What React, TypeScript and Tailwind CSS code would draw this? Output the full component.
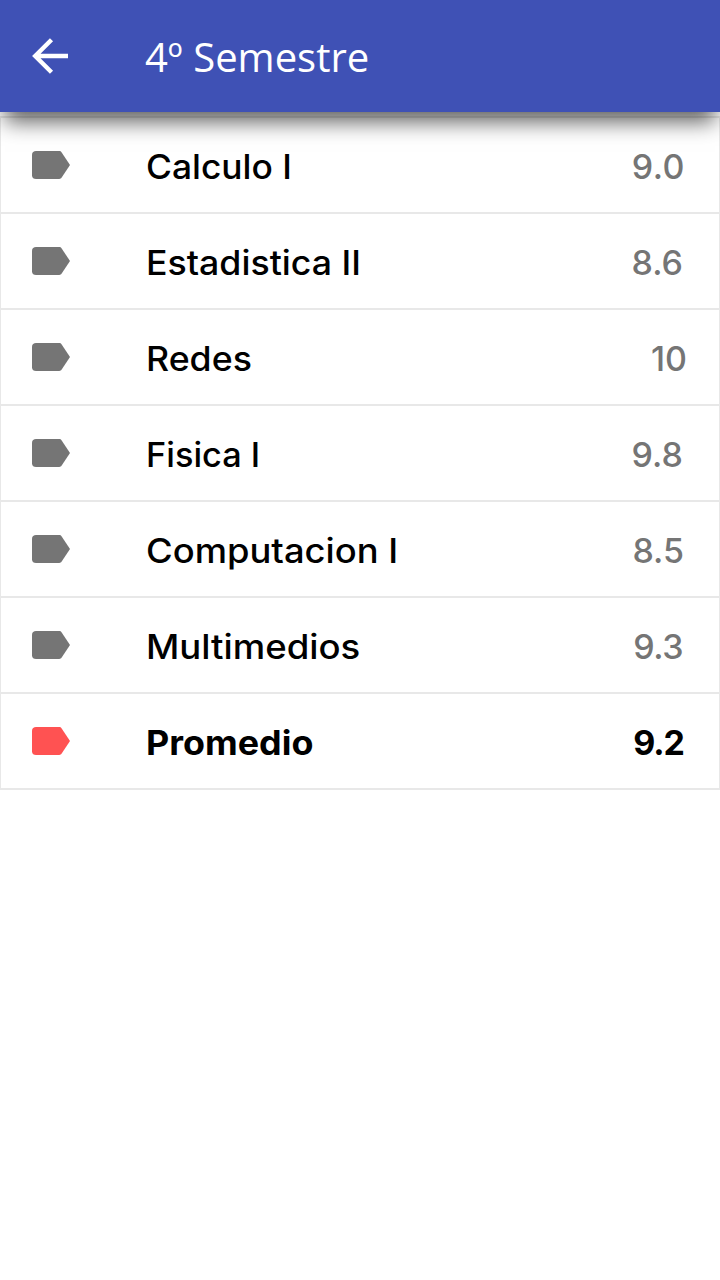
import React from "react";

type Course = { name: string; grade: string; nameStyle: string; gradeStyle: string };

const courses: Course[] = [
  { name: "Calculo I", grade: "9.0", nameStyle: "scale-x-[1.04]", gradeStyle: "text-[#757575] mr-[-1px] tracking-[0.5px]" },
  { name: "Estadistica II", grade: "8.6", nameStyle: "scale-x-[1.05]", gradeStyle: "text-[#757575] mr-px" },
  { name: "Redes", grade: "10", nameStyle: "scale-x-[1.05]", gradeStyle: "text-[#757575] mr-[-3px]" },
  { name: "Fisica I", grade: "9.8", nameStyle: "scale-x-[1.01]", gradeStyle: "text-[#757575] mr-px" },
  { name: "Computacion I", grade: "8.5", nameStyle: "scale-x-[1.07]", gradeStyle: "text-[#757575]" },
  { name: "Multimedios", grade: "9.3", nameStyle: "scale-x-[1.075]", gradeStyle: "text-[#757575] mr-px tracking-[-0.5px]" },
  { name: "Promedio", grade: "9.2", nameStyle: "font-bold scale-x-[1.055]", gradeStyle: "font-bold tracking-[-1px]" },
];

function Label({ className }: { className: string }) {
  return (
    <svg className={className} width="38" height="28" viewBox="0 0 38 28" fill="currentColor" aria-hidden="true">
      <path d="M27.3 0H4C1.8 0 0 1.4 0 3.6V24.4C0 26.6 1.8 28 4 28H27.3C28.3 28 29 27.5 29.5 26.8L38 14L29.5 1.2C29 .5 28.3 0 27.3 0Z" />
    </svg>
  );
}

export default function App() {
  return (
    <div className="min-h-screen w-full bg-white font-['Inter',sans-serif]">
      <header className="relative z-10 flex h-28 items-center bg-[#3f51b5] pl-8 text-white shadow-[0_15px_20px_-5px_rgba(0,0,0,0.62)]">
        <svg width="36" height="36" viewBox="0 0 36 36" fill="none" stroke="currentColor" strokeWidth="4.4" aria-hidden="true">
          <path d="M36 18H4M19.5 1.7L3.2 18L19.5 34.3" />
        </svg>
        <h1 className="ml-[77px] pt-0.5 font-['Open_Sans',sans-serif] text-[40px] leading-none font-normal">4º Semestre</h1>
      </header>
      <ul className="mt-1 border border-t-2 border-b-0 border-[#e8e8e8]">
        {courses.map((c) => (
          <li key={c.name} className="flex h-24 items-center border-b-2 border-[#e8e8e8] pr-[35px] pl-[31px] text-[34px] leading-none font-medium text-black">
            <Label className={c.name === "Promedio" ? "text-[#ff5252]" : "text-[#757575]"} />
            <span className={`ml-[76px] pt-1 origin-left whitespace-nowrap ${c.nameStyle}`}>{c.name}</span>
            <span className={`ml-auto pt-[3px] ${c.gradeStyle}`}>{c.grade}</span>
          </li>
        ))}
      </ul>
    </div>
  );
}
